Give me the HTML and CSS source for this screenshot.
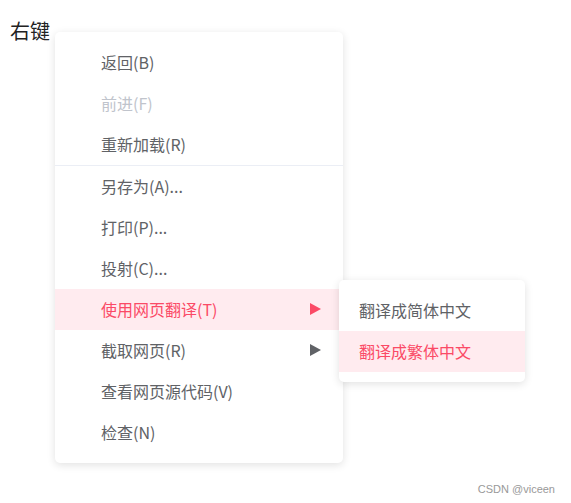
FILE: index.html
```html
<!DOCTYPE html>
<html lang="zh-CN">
  <head>
    <meta charset="UTF-8" />
    <meta name="viewport" content="width=device-width, initial-scale=1.0" />
    <title>右键菜单</title>
    <link rel="stylesheet" href="styles.css">
  </head>
  <body>
    <main class="page">
      <p class="trigger">右键</p>
      <ul class="menu context-menu">
        <li class="menu-item">返回(B)</li>
        <li class="menu-item disabled">前进(F)</li>
        <li class="menu-item divider">重新加载(R)</li>
        <li class="menu-item">另存为(A)...</li>
        <li class="menu-item">打印(P)...</li>
        <li class="menu-item">投射(C)...</li>
        <li class="menu-item has-sub active">
          <span>使用网页翻译(T)</span>
          <span class="arrow"></span>
          <ul class="menu sub-menu">
            <li class="menu-item">翻译成简体中文</li>
            <li class="menu-item active">翻译成繁体中文</li>
          </ul>
        </li>
        <li class="menu-item has-sub">
          <span>截取网页(R)</span>
          <span class="arrow"></span>
        </li>
        <li class="menu-item">查看网页源代码(V)</li>
        <li class="menu-item">检查(N)</li>
      </ul>
    </main>
    <footer class="watermark">CSDN @viceen</footer>
  </body>
</html>
```

FILE: styles.css
```css
*,
*::before,
*::after {
  box-sizing: border-box;
}
:root {
  --clr-text: #606266;
  --clr-muted: #c0c4cc;
  --clr-accent: #fb4a66;
  --clr-accent-bg: #ffebef;
  --ff-base: "Noto Sans CJK SC", "Noto Sans", sans-serif;
}
body {
  width: 571px;
  height: 503px;
  margin: 0;
  font-family: var(--ff-base);
  color: #222;
  background-color: #fff;
  position: relative;
  overflow: hidden;
}
.page {
  padding: 18px 0 0 10px;
}
.trigger {
  margin: 0;
  font-size: 20px;
  line-height: 26px;
  height: 14px;
}
.menu {
  list-style: none;
  margin: 0;
  padding: 10px 0;
  background-color: #fff;
  border-radius: 5px;
  box-shadow: 0 2px 8px rgba(0, 0, 0, 0.12);
}
.context-menu {
  width: 288px;
  margin-left: 45px;
}
.menu-item {
  display: flex;
  align-items: center;
  justify-content: space-between;
  height: 41px;
  padding: 0 22px 2px 46px;
  font-size: 16px;
  color: var(--clr-text);
  white-space: nowrap;
  cursor: default;
}
.menu-item.disabled {
  color: var(--clr-muted);
}
.menu-item.divider {
  height: 42px;
  border-bottom: 1px solid #ebeef5;
}
.menu-item.active {
  color: var(--clr-accent);
  background-color: var(--clr-accent-bg);
}
.has-sub {
  position: relative;
}
.arrow {
  width: 0;
  height: 0;
  border-top: 6px solid transparent;
  border-bottom: 6px solid transparent;
  border-left: 11px solid #606266;
}
.active > .arrow {
  border-left-color: var(--clr-accent);
}
.sub-menu {
  position: absolute;
  top: -9px;
  left: 284px;
  width: 186px;
  z-index: 10;
}
.sub-menu .menu-item {
  padding: 0 20px 2px;
}
.watermark {
  position: absolute;
  right: 16px;
  bottom: 8px;
  font-family: "Liberation Sans", sans-serif;
  font-size: 11px;
  color: #999;
}
```
